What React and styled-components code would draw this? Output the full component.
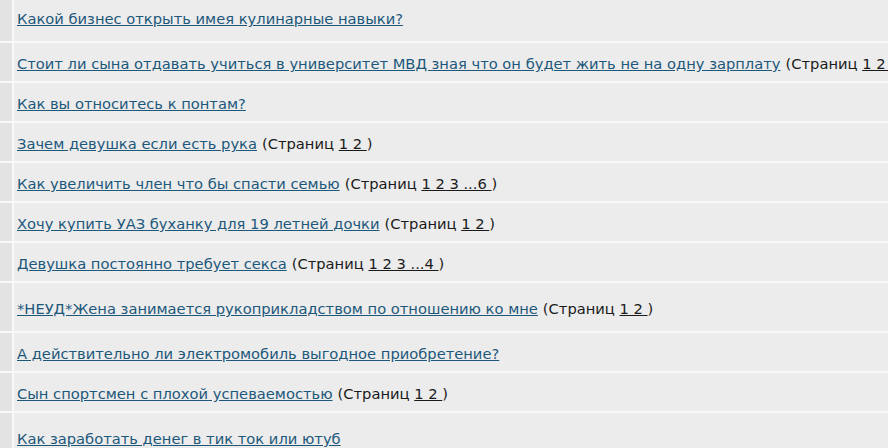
import React from "react";
import styled, { createGlobalStyle } from "styled-components";

const Global = createGlobalStyle`
  html, body { margin: 0; padding: 0; background: #ececec; overflow: hidden; }
  body { font-family: "DejaVu Sans", Verdana, sans-serif; font-size: 14.7px; }
`;

const Table = styled.div`
  display: flex;
  flex-direction: column;
  margin-top: -7px;
  width: 888px;
  overflow: hidden;
`;

const Row = styled.div`
  display: flex;
  height: ${(p) => p.$h}px;
  border-bottom: 2px solid #f8f8f8;
  box-sizing: border-box;
`;

const Side = styled.div`
  width: 12px;
  flex: none;
  background: #e3e3e3;
  border-right: 2px solid #f8f8f8;
`;

const Main = styled.div`
  flex: 1;
  display: flex;
  align-items: center;
  padding: 3px 0 0 3px;
  background: #ececec;
  white-space: nowrap;
  color: #1a1a1a;
  min-width: 0;
  overflow: hidden;
`;

const Topic = styled.a`
  color: #1d587b;
  text-decoration: underline;
  cursor: pointer;
`;

const Pages = styled.span`
  margin-left: 5px;
  color: #1a1a1a;
`;

const PageLinks = styled.span`
  text-decoration: underline;
  color: #1a1a1a;
`;

const rows = [
  { t: "Какой бизнес открыть имея кулинарные навыки?", h: 50 },
  { t: "Стоит ли сына отдавать учиться в университет МВД зная что он будет жить не на одну зарплату", p: "1 2", h: 40 },
  { t: "Как вы относитесь к понтам?", h: 40 },
  { t: "Зачем девушка если есть рука", p: "1 2", h: 40 },
  { t: "Как увеличить член что бы спасти семью", p: "1 2 3 ...6", h: 40 },
  { t: "Хочу купить УАЗ буханку для 19 летней дочки", p: "1 2", h: 40 },
  { t: "Девушка постоянно требует секса", p: "1 2 3 ...4", h: 40 },
  { t: "*НЕУД*Жена занимается рукоприкладством по отношению ко мне", p: "1 2", h: 50 },
  { t: "А действительно ли электромобиль выгодное приобретение?", h: 40 },
  { t: "Сын спортсмен с плохой успеваемостью", p: "1 2", h: 40 },
  { t: "Как заработать денег в тик ток или ютуб", h: 50 },
];

export default function App() {
  return (
    <>
      <Global />
      <Table>
        {rows.map((r, i) => (
          <Row key={i} $h={r.h}>
            <Side />
            <Main>
              <Topic>{r.t}</Topic>
              {r.p && (
                <Pages>
                  (Страниц <PageLinks>{r.p + " "}</PageLinks>)
                </Pages>
              )}
            </Main>
          </Row>
        ))}
      </Table>
    </>
  );
}
